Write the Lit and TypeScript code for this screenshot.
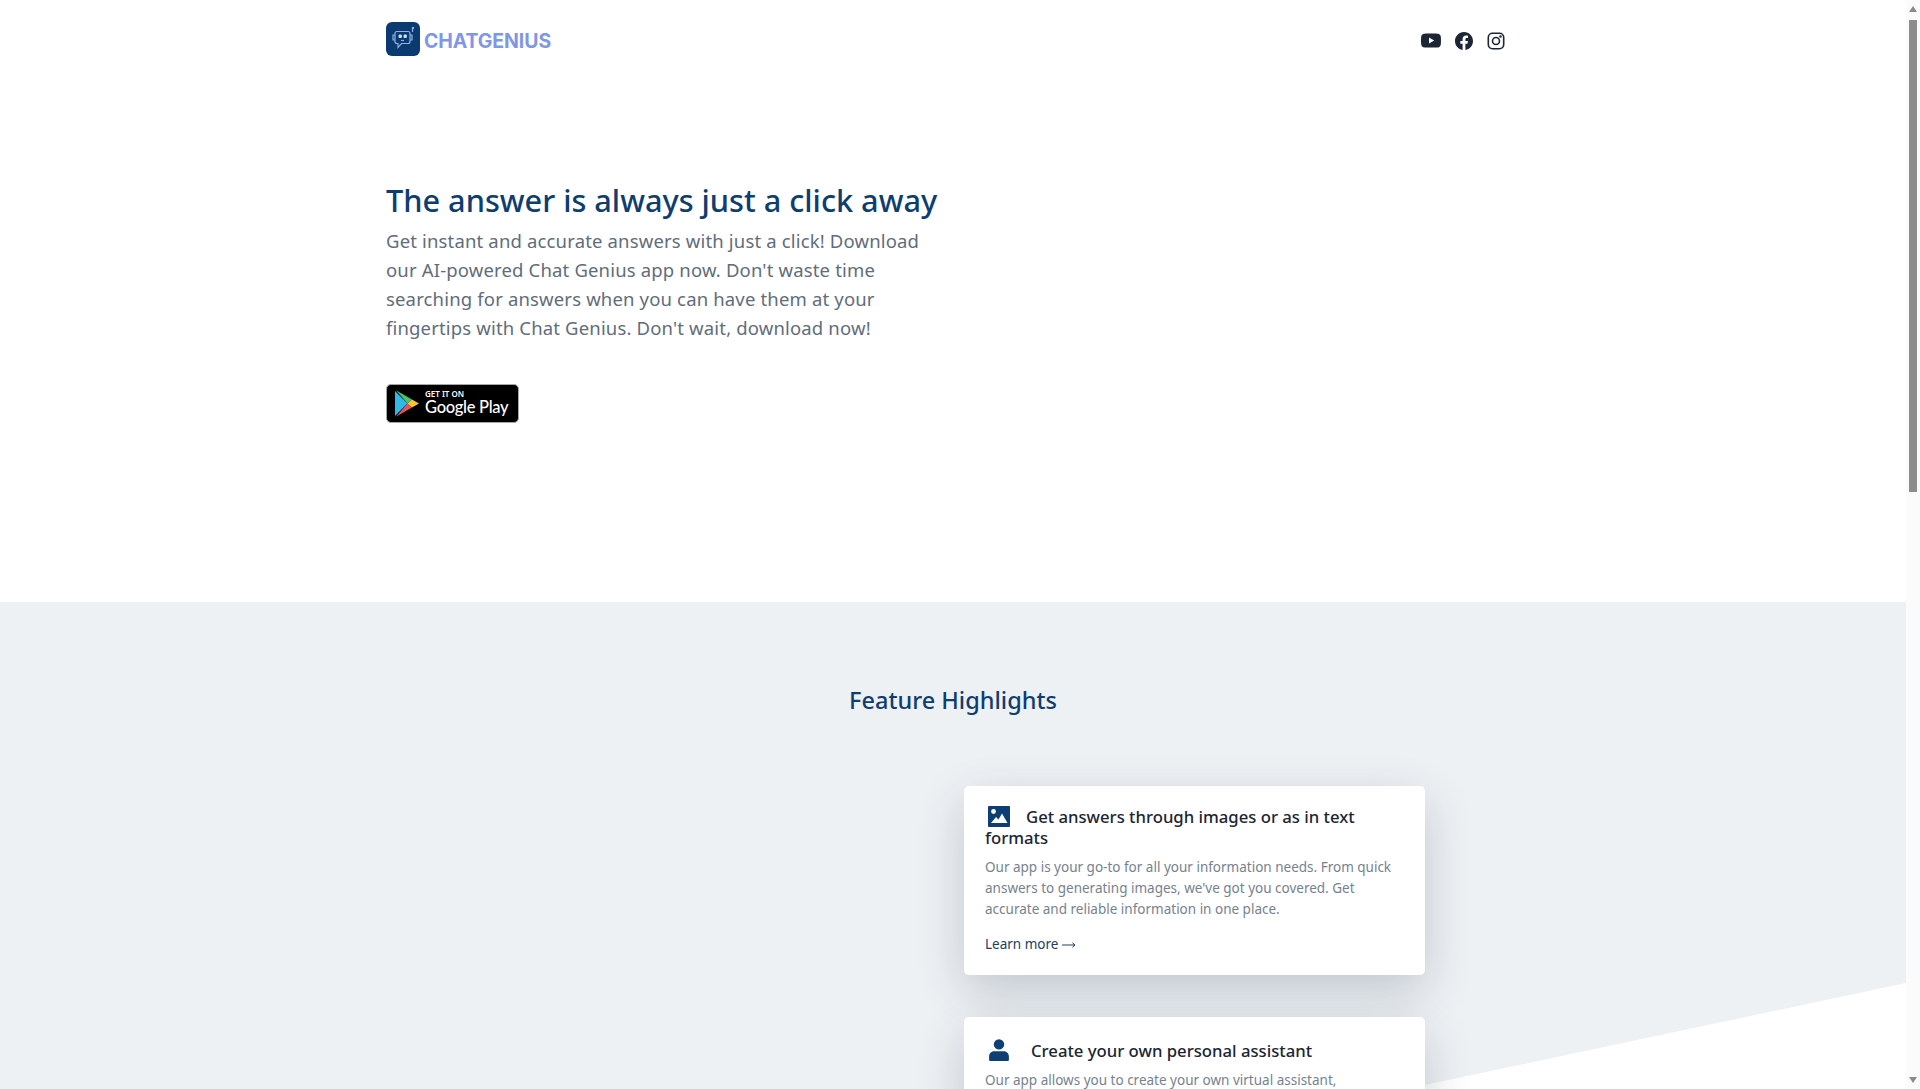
import { LitElement, html, css, svg } from 'lit';
import { customElement } from 'lit/decorators.js';

const features = [
  {
    icon: 'image',
    title: 'Get answers through images or as in text formats',
    text: "Our app is your go-to for all your information needs. From quick answers to generating images, we've got you covered. Get accurate and reliable information in one place.",
  },
  {
    icon: 'person',
    title: 'Create your own personal assistant',
    text: 'Our app allows you to create your own virtual assistant, personalized to the way you work and the things you need every day.',
  },
];

const imageIcon = svg`<svg class="ficon" width="22" height="21" viewBox="0 0 22 21">
  <path fill="#0d3f75" d="M1 0h20a1 1 0 0 1 1 1v19a1 1 0 0 1-1 1H1a1 1 0 0 1-1-1V1a1 1 0 0 1 1-1z"/>
  <circle cx="5.5" cy="5.5" r="2.4" fill="#fff"/>
  <path fill="#fff" d="M3 17l5-6 2.5 2.6L14 7.5 19.5 17z"/>
</svg>`;

const personIcon = svg`<svg class="ficon person" width="20" height="22" viewBox="0 0 20 22">
  <circle cx="10" cy="5.4" r="5.2" fill="#0d3f75"/>
  <path fill="#0d3f75" d="M5 12.2h10c2.8 0 4.9 2.4 4.9 5.4V21a1 1 0 0 1-1 1H1.1a1 1 0 0 1-1-1v-3.4c0-3 2.1-5.4 4.900-5.400z"/>
</svg>`;

const arrowIcon = svg`<svg class="arrow-icon" width="14" height="8" viewBox="0 0 14 8" fill="none" stroke="#20405f">
  <path d="M0 4h13M10.500 1.800 13 4l-2.500 2.200"/>
</svg>`;

@customElement('feature-card')
export class FeatureCard extends LitElement {
  static properties = {
    icon: { type: String },
    heading: { type: String },
    text: { type: String },
  };

  declare icon: string;
  declare heading: string;
  declare text: string;

  static styles = css`
    :host {
      display: block;
    }

    .card {
      background: #fff;
      border-radius: 5px;
      padding: 20px 21px 20px;
      box-shadow: 0 16px 48px rgba(20, 35, 55, 0.2);
    }

    h3 {
      margin: 0 0 9px;
      font-family: 'Noto Sans', sans-serif;
      font-weight: 500;
      font-size: 16.7px;
      line-height: 21px;
      color: #1b2533;
    }

    .ficon {
      vertical-align: -4px;
      margin: 0 16px 0 3px;
    }

    .ficon.person {
      margin: 2px 22px 0 4px;
      vertical-align: -4px;
    }

    p {
      margin: 0 0 12px;
      font-family: 'Noto Sans', sans-serif;
      font-size: 13.5px;
      line-height: 21px;
      color: #76828f;
    }

    a {
      font-family: 'Noto Sans', sans-serif;
      font-size: 13.5px;
      line-height: 21px;
      color: #20405f;
      text-decoration: none;
    }
  `;

  render() {
    return html`
      <div class="card">
        <h3>${this.icon === 'image' ? imageIcon : personIcon}${this.heading}</h3>
        <p>${this.text}</p>
        <a href="#">Learn more ${arrowIcon}</a>
      </div>
    `;
  }
}

@customElement('app-root')
export class AppRoot extends LitElement {
  static styles = css`
    :host {
      display: block;
      position: relative;
      height: 1089px;
      overflow: hidden;
      background: #fff;
      font-family: 'Noto Sans', sans-serif;
    }

    .page {
      margin-right: 14px;
    }

    .container {
      width: 1134px;
      margin: 0 auto;
    }

    header {
      display: flex;
      align-items: center;
      justify-content: space-between;
      height: 82px;
      padding: 0 15px 0 0;
    }

    .brand {
      display: flex;
      align-items: center;
      gap: 4px;
      margin-top: -5px;
    }

    .wordmark {
      margin-top: 4px;
      font-family: 'Inter', sans-serif;
      font-weight: 700;
      font-size: 19.500px;
      letter-spacing: -0.1px;
      color: #7f97e6;
    }

    .social {
      display: flex;
      align-items: center;
      gap: 14px;
    }

    .hero {
      height: 520px;
      padding-top: 99px;
      box-sizing: border-box;
    }

    h1 {
      margin: 0;
      font-family: 'Noto Sans', sans-serif;
      font-weight: 500;
      font-size: 30.700px;
      line-height: 38px;
      padding-bottom: 2px;
      color: #0e3d70;
    }

    .lead {
      width: 560px;
      margin: 5px 0 0;
      font-size: 18.500px;
      letter-spacing: 0.16px;
      line-height: 29px;
      color: #5f6d7c;
    }

    .badge {
      display: flex;
      align-items: center;
      gap: 6px;
      width: 133px;
      height: 39px;
      margin-top: 42px;
      padding-left: 8px;
      box-sizing: border-box;
      background: #000;
      border: 1px solid #a6a6a6;
      border-radius: 5px;
      color: #fff;
    }

    .badge-text {
      display: flex;
      flex-direction: column;
    }

    .badge small {
      font-size: 8px;
      line-height: 8px;
      font-weight: 600;
    }

    .badge b {
      font-family: 'Lato', sans-serif;
      font-size: 16.500px;
      line-height: 19px;
      font-weight: 500;
      letter-spacing: -0.3px;
    }

    .features {
      position: relative;
      height: 487px;
      background: #eef1f4;
      overflow: hidden;
    }

    .slant {
      position: absolute;
      left: 0;
      right: 0;
      bottom: 0;
      height: 106px;
      background: #fff;
      clip-path: polygon(100% 0, 100% 100%, 1406px 100%);
    }

    h2 {
      position: relative;
      margin: 0;
      padding-top: 79px;
      text-align: center;
      font-family: 'Noto Sans', sans-serif;
      font-weight: 500;
      font-size: 23.500px;
      line-height: 38px;
      color: #0e3d70;
    }

    .cards {
      position: relative;
      display: flex;
      flex-direction: column;
      gap: 42px;
      width: 461px;
      margin: 67px 0 0 578px;
    }

    .scrollbar {
      position: absolute;
      top: 0;
      right: 0;
      bottom: 0;
      width: 14px;
      background: #fbfbfb;
    }

    .arrow {
      position: absolute;
      left: 3px;
      border-left: 4px solid transparent;
      border-right: 4px solid transparent;
    }

    .arrow.up {
      top: 6px;
      border-bottom: 6px solid #8a8a8a;
    }

    .arrow.down {
      bottom: 6px;
      border-top: 6px solid #8a8a8a;
    }

    .thumb {
      position: absolute;
      top: 20px;
      left: 3px;
      width: 8px;
      height: 472px;
      background: #8c8c8c;
    }
  `;

  render() {
    return html`
      <div class="page">
        <div class="container">
          <header>
            <div class="brand">
              <svg width="34" height="34" viewBox="0 0 34 34">
                <rect width="34" height="34" rx="6" fill="#0b3a70" />
                <g fill="none" stroke="#8fb0e8" stroke-width="1.200">
                  <path d="M11 9.500h11a2 2 0 0 1 2 2v8a2 2 0 0 1-2 2H15.500l-3.500 4v-4H11a2 2 0 0 1-2-2v-8a2 2 0 0 1 2-2z" />
                  <path d="M9 13H7v5h2M24 13h2v5h-2M26.500 10V6.500" />
                  <path d="M15 18.500h3" />
                </g>
                <circle cx="27" cy="6" r="1.200" fill="#8fb0e8" />
                <rect x="12.500" y="12.500" width="3.400" height="3.400" rx="1.200" fill="#cfe0fa" />
                <rect x="17.500" y="12.500" width="3.400" height="3.400" rx="1.200" fill="#cfe0fa" />
              </svg>
              <span class="wordmark">CHATGENIUS</span>
            </div>
            <div class="social">
              <svg width="20" height="20" viewBox="0 0 16 16" fill="#1c2636">
                <path d="M8.051 1.999h.089c.822.003 4.987.033 6.11.335a2.01 2.01 0 0 1 1.415 1.42c.101.38.172.883.22 1.402l.01.104.022.26.008.104c.065.914.073 1.77.074 1.957v.075c-.001.194-.01 1.108-.082 2.06l-.008.105-.009.104c-.05.572-.124 1.14-.235 1.558a2.007 2.007 0 0 1-1.415 1.42c-1.16.312-5.569.334-6.18.335h-.142c-.309 0-1.587-.006-2.927-.052l-.17-.006-.087-.004-.171-.007-.171-.007c-1.11-.049-2.167-.128-2.654-.26a2.007 2.007 0 0 1-1.415-1.419c-.111-.417-.185-.986-.235-1.558L.09 9.820l-.008-.104A31.400 31.400 0 0 1 0 7.680v-.123c.002-.215.01-.958.064-1.778l.007-.103.003-.052.008-.104.022-.26.01-.104c.048-.519.119-1.023.22-1.402a2.007 2.007 0 0 1 1.415-1.420c.487-.13 1.544-.21 2.654-.26l.17-.007.172-.006.086-.003.171-.007A99.788 99.788 0 0 1 7.858 2h.193zM6.400 5.209v4.818l4.157-2.408L6.400 5.209z" />
              </svg>
              <svg width="18" height="18" viewBox="0 0 16 16" fill="#1c2636">
                <path d="M16 8.049c0-4.446-3.582-8.050-8-8.050C3.580 0-.002 3.603-.002 8.050c0 4.017 2.926 7.347 6.750 7.951v-5.625h-2.030V8.050H6.750V6.275c0-2.017 1.195-3.131 3.022-3.131.876 0 1.791.157 1.791.157v1.980h-1.009c-.993 0-1.303.621-1.303 1.258v1.510h2.218l-.354 2.326H9.250V16c3.824-.604 6.750-3.934 6.750-7.951z" />
              </svg>
              <svg width="18" height="18" viewBox="0 0 18 18" fill="none" stroke="#1c2636" stroke-width="1.600">
                <rect x="1.300" y="1.300" width="15.400" height="15.400" rx="4.200" />
                <circle cx="9" cy="9" r="3.500" />
                <circle cx="13.500" cy="4.500" r="0.500" fill="#1c2636" />
              </svg>
            </div>
          </header>
          <section class="hero">
            <h1>The answer is always just a click away</h1>
            <p class="lead">
              Get instant and accurate answers with just a click! Download our AI-powered Chat Genius app now. Don't waste
              time searching for answers when you can have them at your fingertips with Chat Genius. Don't wait, download now!
            </p>
            <div class="badge">
              <svg width="24" height="27" viewBox="0 0 24 27">
                <path fill="#2fb8e8" d="M0 1v25l12.500-12.500z" />
                <path fill="#4cc26b" d="M1 0.300 17 9.500 12.500 13.500z" />
                <path fill="#e8505b" d="M1 26.700 17 17.500 12.500 13.500z" />
                <path fill="#fbc430" d="M17 9.500 24 13.500 17 17.500 12.500 13.500z" />
              </svg>
              <div class="badge-text">
                <small>GET IT ON</small>
                <b>Google Play</b>
              </div>
            </div>
          </section>
        </div>
        <section class="features">
          <div class="slant"></div>
          <h2>Feature Highlights</h2>
          <div class="container">
            <div class="cards">
              ${features.map(
                (f) => html`<feature-card .icon=${f.icon} .heading=${f.title} .text=${f.text}></feature-card>`
              )}
            </div>
          </div>
        </section>
      </div>
      <div class="scrollbar">
        <div class="arrow up"></div>
        <div class="thumb"></div>
        <div class="arrow down"></div>
      </div>
    `;
  }
}
